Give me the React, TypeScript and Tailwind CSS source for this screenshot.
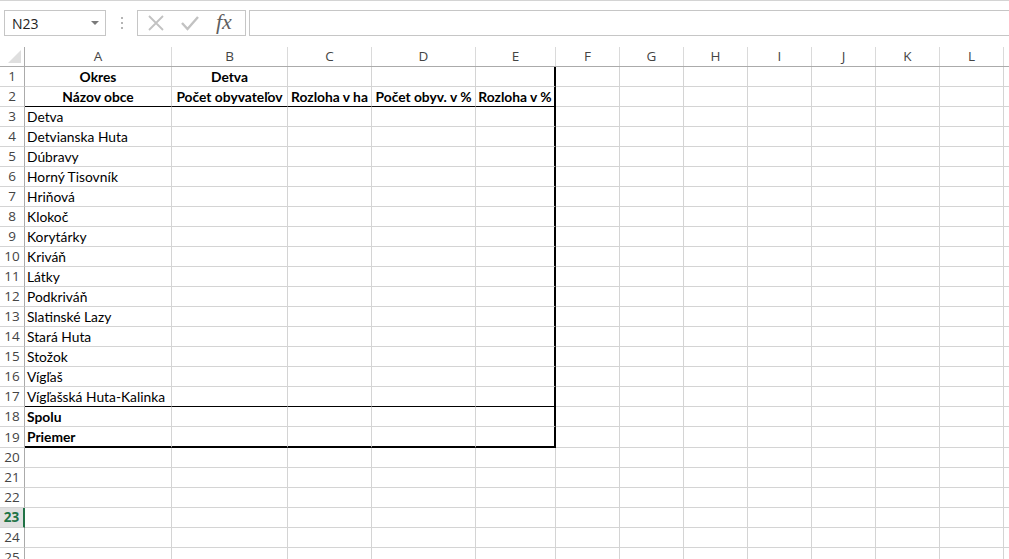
const cols = [
  { l: "A", w: 147 },
  { l: "B", w: 116 },
  { l: "C", w: 84 },
  { l: "D", w: 104 },
  { l: "E", w: 80 },
  { l: "F", w: 64 },
  { l: "G", w: 64 },
  { l: "H", w: 64 },
  { l: "I", w: 64 },
  { l: "J", w: 64 },
  { l: "K", w: 64 },
  { l: "L", w: 64 },
  { l: "", w: 10 },
];

type Cell = { t: string; b?: boolean; c?: boolean };

const data: Record<number, Cell[]> = {
  1: [{ t: "Okres", b: true, c: true }, { t: "Detva", b: true, c: true }],
  2: [
    { t: "Názov obce", b: true, c: true },
    { t: "Počet obyvateľov", b: true, c: true },
    { t: "Rozloha v ha", b: true, c: true },
    { t: "Počet obyv. v %", b: true, c: true },
    { t: "Rozloha v %", b: true, c: true },
  ],
  3: [{ t: "Detva" }],
  4: [{ t: "Detvianska Huta" }],
  5: [{ t: "Dúbravy" }],
  6: [{ t: "Horný Tisovník" }],
  7: [{ t: "Hriňová" }],
  8: [{ t: "Klokoč" }],
  9: [{ t: "Korytárky" }],
  10: [{ t: "Kriváň" }],
  11: [{ t: "Látky" }],
  12: [{ t: "Podkriváň" }],
  13: [{ t: "Slatinské Lazy" }],
  14: [{ t: "Stará Huta" }],
  15: [{ t: "Stožok" }],
  16: [{ t: "Vígľaš" }],
  17: [{ t: "Vígľašská Huta-Kalinka" }],
  18: [{ t: "Spolu", b: true }],
  19: [{ t: "Priemer", b: true }],
};

const rows = Array.from({ length: 25 }, (_, i) => i + 1);

function cellBorders(r: number, c: number) {
  if (r > 19 || c > 4) return "border-b border-r border-b-[#d4d4d4] border-r-[#d4d4d4]";
  let s = "";
  if (r === 2 || r === 17) s += "border-b border-b-black ";
  else if (r === 19) s += "border-b-2 border-b-black ";
  else s += "border-b border-b-[#d4d4d4] ";
  if (c === 4) s += "border-r-2 border-r-black";
  else s += "border-r border-r-[#d4d4d4]";
  return s;
}

export default function App() {
  return (
    <div className="w-[1009px] h-[559px] overflow-hidden bg-white">
      <div className="h-px bg-[#d4d4d4]" />

      {/* formula bar */}
      <div className="flex items-stretch h-[26px] mt-[9px] font-['Open_Sans',sans-serif] text-[14px] text-[#222]">
        <div className="ml-[4px] w-[102px] flex items-center justify-between border border-[#c6c6c6] pl-[7px] pr-[6px]">
          <span>N23</span>
          <svg width="8" height="5" viewBox="0 0 8 5">
            <polygon points="0,0 8,0 4,4" fill="#7a7a7a" />
          </svg>
        </div>
        <div className="w-[31px] flex flex-col items-center justify-center gap-[3px]">
          <span className="block w-[2px] h-[2px] bg-[#b5b5b5]" />
          <span className="block w-[2px] h-[2px] bg-[#b5b5b5]" />
          <span className="block w-[2px] h-[2px] bg-[#b5b5b5]" />
        </div>
        <div className="w-[109px] flex items-center border border-[#c6c6c6] pl-[10px] gap-[17px]">
          <svg width="16" height="16" viewBox="0 0 16 16">
            <path d="M1 1 L15 15 M15 1 L1 15" stroke="#c2c2c2" strokeWidth="1.8" fill="none" />
          </svg>
          <svg width="18" height="16" viewBox="0 0 18 16">
            <path d="M1 8 L6.5 14 L17 2" stroke="#c2c2c2" strokeWidth="2.4" fill="none" />
          </svg>
          <span className="font-['Liberation_Serif',serif] italic text-[22px] leading-none text-[#5f5f5f] -mt-[3px]">
            fx
          </span>
        </div>
        <div className="flex-1 ml-[3px] border border-[#c6c6c6] border-r-0" />
      </div>

      {/* grid */}
      <div className="mt-[11px] font-['Lato',sans-serif] text-[13.8px] text-black">
        <div className="flex h-[20px] border-b border-[#ababab] font-['Open_Sans',sans-serif] text-[13.5px] text-[#444]">
          <div className="w-[25px] shrink-0 border-r border-[#ababab] relative">
            <svg className="absolute right-[3px] bottom-[3px]" width="13" height="13" viewBox="0 0 13 13">
              <polygon points="13,0 13,13 0,13" fill="#dfdfdf" />
            </svg>
          </div>
          {cols.map((col, i) => (
            <div
              key={i}
              style={{ width: col.w }}
              className="shrink-0 border-r border-[#dadada] flex items-center justify-center leading-[19px]"
            >
              {col.l}
            </div>
          ))}
        </div>

        {rows.map((r) => {
          const sel = r === 23;
          const cells = data[r] || [];
          return (
            <div key={r} className={`flex ${r === 19 ? "h-[21px]" : "h-[20px]"}`}>
              <div
                className={`w-[25px] shrink-0 flex items-center justify-center border-b border-b-[#d4d4d4] font-['Open_Sans',sans-serif] text-[13.5px] leading-[19px] ${
                  sel
                    ? "bg-[#e1e1e1] text-[#217346] font-bold border-r-2 border-r-[#217346]"
                    : "text-[#444] border-r border-r-[#ababab]"
                }`}
              >
                {r}
              </div>
              {cols.map((col, c) => {
                const cell = cells[c];
                return (
                  <div
                    key={c}
                    style={{ width: col.w }}
                    className={`shrink-0 flex items-end overflow-visible whitespace-nowrap leading-[19px] px-[2px] ${cellBorders(r, c)} ${
                      cell?.c ? "justify-center" : "justify-start"
                    } ${cell?.b ? "font-bold" : ""}`}
                  >
                    {cell?.t}
                  </div>
                );
              })}
            </div>
          );
        })}
      </div>
    </div>
  );
}
